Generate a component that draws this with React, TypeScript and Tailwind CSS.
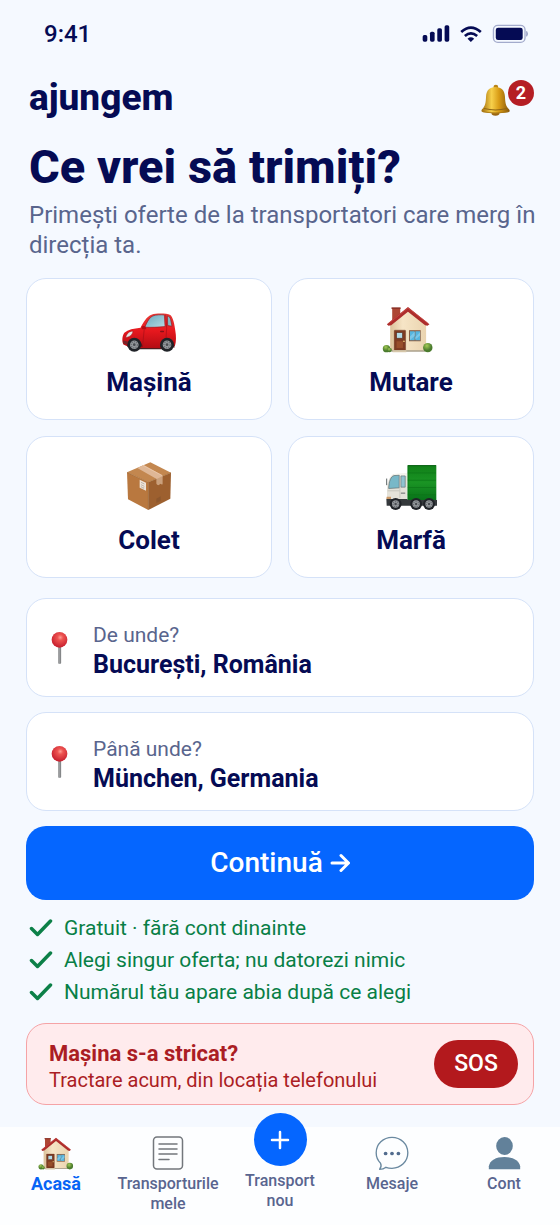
import { useState } from "react";
import type { ReactNode } from "react";

function StatusIcons() {
  return (
    <svg viewBox="426 72 322 60" className="h-5 w-[107px]" aria-hidden="true">
      <g fill="#050b54">
        <rect x="428" y="105" width="14" height="20" rx="5" />
        <rect x="450" y="95" width="14" height="30" rx="5" />
        <rect x="472" y="85" width="14" height="40" rx="5" />
        <rect x="494" y="76" width="14" height="49" rx="5" />
        <path d="M573 126l-10-10q10-8 20 0z" />
      </g>
      <g fill="none" stroke="#050b54" strokeWidth="8">
        <path d="M544 96q29-27 59 0" />
        <path d="M555 108q18-16 37 0" />
      </g>
      <rect x="641" y="76" width="95" height="51" rx="13" fill="none" stroke="#a3abcc" strokeWidth="4" />
      <rect x="648" y="83" width="81" height="37" rx="7" fill="#050b54" />
      <path d="M741 94q5 7 0 15z" fill="#8d96bd" stroke="#8d96bd" strokeWidth="2" />
    </svg>
  );
}

function BellIcon() {
  return (
    <svg viewBox="33 45 86 95" className="h-8 w-[29px]" aria-hidden="true">
      <defs>
        <linearGradient id="bell">
          <stop offset="0" stopColor="#a06c0c" />
          <stop offset=".36" stopColor="#f7d04b" />
          <stop offset=".62" stopColor="#d99c16" />
          <stop offset="1" stopColor="#85560a" />
        </linearGradient>
      </defs>
      <ellipse cx="76" cy="131" rx="12" ry="8" fill="#9a6612" />
      <circle cx="77" cy="54" r="7" fill="#b98316" />
      <path d="M76 54c-18 0-27 11-28 27-1 20-2 29-12 39-3 4-2 8 3 9 24 4 50 4 75 0 5-1 5-6 2-9-10-10-11-20-12-39-1-16-10-27-28-27z" fill="url(#bell)" />
      <path d="M42 118c22 5 46 5 68 0" fill="none" stroke="#8d6414" strokeWidth="3" />
      <path d="M38 127c25 5 51 5 76 0" fill="none" stroke="#a67513" strokeWidth="3" />
    </svg>
  );
}

function Wheel({ x, y, r }: { x: number; y: number; r: number }) {
  return (
    <g>
      <circle cx={x} cy={y} r={r} fill="#202328" />
      <circle cx={x} cy={y} r={r * 0.62} fill="#95999d" />
      <circle cx={x} cy={y} r={r * 0.45} fill="none" stroke="#6b6f74" strokeWidth={r * 0.2} strokeDasharray="4 3" />
      <circle cx={x} cy={y} r={r * 0.2} fill="#4a4d52" />
    </g>
  );
}

function CarIcon() {
  return (
    <svg viewBox="64 48 170 124" className="h-[41px] w-[57px]" aria-hidden="true">
      <defs>
        <linearGradient id="carBody" x2="0" y2="1">
          <stop offset="0" stopColor="#e83a37" />
          <stop offset=".5" stopColor="#e6181e" />
          <stop offset="1" stopColor="#b30c13" />
        </linearGradient>
        <linearGradient id="glass" x2="1" y2="1">
          <stop offset="0" stopColor="#68a8bd" />
          <stop offset="1" stopColor="#b5dbe3" />
        </linearGradient>
      </defs>
      <path d="M86 148h132v13H90z" fill="#3b2023" />
      <path d="M122 96c9-20 19-34 33-40 17-5 45-4 57 1 8 6 13 29 15 47 3 18 3 34-1 46l-12 6-32 2-62-1-35-4-15-7c-5-9-4-25 3-35 11-9 28-13 49-15z" fill="url(#carBody)" />
      <path d="M135 94c7-18 15-30 24-34 9-4 25-4 35-3l2 35c-21 2-42 3-61 2z" fill="url(#glass)" stroke="#9b1820" strokeWidth="2" />
      <path d="M203 60c6 1 8 4 10 11l4 20-13-2z" fill="#85b8c3" stroke="#971620" strokeWidth="2" />
      <path d="M198 56l3 41-4 57M133 100l-5 52" fill="none" stroke="#a40d17" strokeWidth="2" />
      <path d="M77 125c3-13 12-19 22-19-1 9-9 18-22 19z" fill="#e6e9e8" stroke="#9d1218" strokeWidth="1.5" />
      <path d="M69 134l14 3v9l-13-2z" fill="#74252a" />
      <path d="M82 153c0-26 42-32 46 0zM181 155c0-31 42-34 44 0z" fill="#5d1116" />
      <path d="M125 92c8-5 15 0 14 8h-13z" fill="#b30d15" />
      <rect x="181" y="105" width="12" height="4" rx="2" fill="#851018" />
      <Wheel x={103} y={147} r={21} />
      <Wheel x={202} y={147} r={21} />
    </svg>
  );
}

function HouseIcon({ small = false }: { small?: boolean }) {
  return (
    <svg
      viewBox={small ? "66 32 154 140" : "66 32 172 140"}
      className={small ? "h-[33px] w-[36px]" : "h-[47px] w-[58px]"}
      aria-hidden="true"
    >
      <defs>
        <linearGradient id="wall">
          <stop offset="0" stopColor="#dcc29b" />
          <stop offset=".35" stopColor="#f6e5c6" />
          <stop offset="1" stopColor="#ead4b0" />
        </linearGradient>
        <radialGradient id="bush" cx=".4" cy=".3">
          <stop offset="0" stopColor="#a4ca55" />
          <stop offset="1" stopColor="#4a7b2d" />
        </radialGradient>
      </defs>
      <path d="M96 39h24v28l-24 18z" fill="#ad4634" />
      <path d="M94 36h27v5H94z" fill="#8d3328" />
      <path d="M90 82l53-43 54 43v84H90z" fill="url(#wall)" />
      <path d="M80 86l63-51 64 51-6 5-7-2-51-40-50 40-8 2z" fill="#ad2d2c" />
      <path d="M85 84l58-46 59 45" fill="none" stroke="#cf5048" strokeWidth="2" />
      <rect x="102" y="104" width="34" height="60" rx="2" fill="#7e3b22" stroke="#5f2b19" strokeWidth="1" />
      <rect x="109" y="111" width="18" height="17" fill="#b3dbe7" stroke="#5d3022" strokeWidth="2" />
      <path d="M109 137h19v20h-19z" fill="#984e2b" />
      <circle cx="131" cy="137" r="2.5" fill="#e8c575" />
      <rect x="146" y="104" width="35" height="33" fill="#8b6046" />
      <path d="M149 107h14v27h-14zm16 0h14v27h-14z" fill="#55b5df" />
      <path d="M149 133v-10l14-14v12zM165 124l14-14v10l-14 12z" fill="#7cc7e7" />
      <path d="M94 164h101v4H94z" fill="#aaa08d" />
      <path d="M99 164h39v6H97z" fill="#d6c7aa" />
      <circle cx="79" cy="159" r="11" fill="url(#bush)" />
      <circle cx="88" cy="163" r="7" fill="url(#bush)" />
      <circle cx="202" cy="156" r="14" fill="url(#bush)" />
    </svg>
  );
}

function BoxIcon() {
  return (
    <svg viewBox="81 36 138 150" className="h-[50px] w-[46px]" aria-hidden="true">
      <path d="M84 70l64 30v83l-61-32z" fill="#b9783f" />
      <path d="M148 100l68-29-2 78-66 34z" fill="#9d602f" />
      <path d="M84 70l70-30 62 31-68 29z" fill="#c3874f" />
      <path d="M84 70l64 30 68-29M148 100v82" fill="none" stroke="#94602f" strokeWidth="1.500" />
      <path d="M115 57l19-9 56 31v26l-6-3-6 6-5-4V90z" fill="#dfb796" />
      <path d="M173 90l17-8v25l-6-3-5 5-6-3z" fill="#caa07c" />
      <path d="M122 92l19 9v24l-19-9z" fill="#eee4d8" />
      <path d="M126 100l10 5m-10 2l10 5m-9 0v4m4-2v4m3-3v4" stroke="#a59b90" strokeWidth="2" />
      <path d="M172 149l13-7v13l-13 7z" fill="#8d572d" />
      <path d="M132 49l58 31" stroke="#f0cdb0" strokeWidth="2" />
    </svg>
  );
}

function TruckIcon() {
  return (
    <svg viewBox="72 40 160 142" className="h-[47px] w-[53px]" aria-hidden="true">
      <defs>
        <linearGradient id="cargo" x2="0" y2="1">
          <stop offset="0" stopColor="#118018" />
          <stop offset=".5" stopColor="#1a9424" />
          <stop offset="1" stopColor="#087219" />
        </linearGradient>
      </defs>
      <path d="M140 44h87v105h-87z" fill="url(#cargo)" />
      <path d="M142 46v102M141 67h85m-85 22h85m-85 22h85m-85 22h85" stroke="#0a7417" strokeWidth="2" />
      <path d="M141 45h85" stroke="#075f12" strokeWidth="3" />
      <path d="M78 149V117c1-23 7-39 20-47l40-1v80z" fill="#e4e2d9" />
      <path d="M99 70l39-1v7H95z" fill="#f6f5ee" />
      <path d="M83 114c1-22 6-35 16-39l16-1v38z" fill="#78b8c8" stroke="#5b6b6d" strokeWidth="2" />
      <path d="M120 76h13v34h-13z" fill="#8fc3d0" stroke="#657273" strokeWidth="2" />
      <path d="M117 76v67M80 121h36" fill="none" stroke="#b9b9b0" strokeWidth="2" />
      <path d="M77 84v20" stroke="#5c6364" strokeWidth="3" />
      <path d="M76 146h64v3h89v17H77z" fill="#35393c" />
      <path d="M77 139h13v7H76z" fill="#cd9b6a" />
      <path d="M120 128h13" stroke="#65696a" strokeWidth="3" />
      <Wheel x={104} y={161} r={18} />
      <Wheel x={166} y={161} r={18} />
      <Wheel x={205} y={161} r={18} />
    </svg>
  );
}

function PinIcon() {
  return (
    <svg viewBox="94 123 52 102" className="h-[34px] w-[17px] shrink-0" aria-hidden="true">
      <defs>
        <radialGradient id="pin" cx=".55" cy=".35" r=".6">
          <stop offset="0" stopColor="#ff9d94" />
          <stop offset=".3" stopColor="#ee5451" />
          <stop offset="1" stopColor="#c92230" />
        </radialGradient>
      </defs>
      <rect x="116" y="165" width="9" height="57" rx="2" fill="#858789" />
      <path d="M119 170v51" stroke="#b7b8ba" strokeWidth="2" />
      <circle cx="120" cy="149" r="24" fill="url(#pin)" />
    </svg>
  );
}

function CheckIcon() {
  return (
    <svg viewBox="0 0 24 20" className="h-5 w-6 shrink-0" fill="none" stroke="#0c8048" strokeWidth="3.500" strokeLinecap="round" strokeLinejoin="round" aria-hidden="true">
      <path d="M2.500 9.500l6 6L21.500 2" />
    </svg>
  );
}

function PlaceField({ id, label, initial }: { id: string; label: string; initial: string }) {
  const [value, setValue] = useState(initial);
  return (
    <div className="flex h-[99px] items-center gap-[25px] rounded-[20px] border border-[#d5e2f8] bg-white px-6">
      <PinIcon />
      <div className="flex min-w-0 flex-1 flex-col pt-1">
        <label htmlFor={id} className="text-[21px] leading-[30px] text-[#59658d]">{label}</label>
        <input
          id={id}
          value={value}
          onChange={(e) => setValue(e.target.value)}
          className="h-[30px] w-full bg-transparent text-[25px] font-bold text-[#050b54] outline-none"
        />
      </div>
    </div>
  );
}

function NavItem({ label, icon, active = false }: { label: string; icon: ReactNode; active?: boolean }) {
  return (
    <a
      href="#"
      aria-current={active ? "page" : undefined}
      className={
        active
          ? "flex flex-col items-center gap-[3px] pt-2 text-center text-lg leading-5 font-bold text-[#0764f5]"
          : "flex flex-col items-center gap-[3px] pt-2 text-center text-base leading-5 font-medium text-[#59658f]"
      }
    >
      <span className="flex h-9 items-center">{icon}</span>
      <span>{label}</span>
    </a>
  );
}

const categories = [
  { name: "Mașină", icon: <CarIcon /> },
  { name: "Mutare", icon: <HouseIcon /> },
  { name: "Colet", icon: <BoxIcon /> },
  { name: "Marfă", icon: <TruckIcon /> },
];

const benefits = [
  "Gratuit · fără cont dinainte",
  "Alegi singur oferta; nu datorezi nimic",
  "Numărul tău apare abia după ce alegi",
];

export default function App() {
  return (
    <div className="flex min-h-screen flex-col bg-[#f5f9ff] font-['Roboto',sans-serif] text-[#050b54]">
      <div className="flex h-[68px] items-center justify-between pr-[31px] pl-11">
        <span className="text-2xl font-medium">9:41</span>
        <StatusIcons />
      </div>

      <main className="flex flex-1 flex-col px-[26px]">
        <header className="flex h-[60px] items-center justify-between pl-[3px]">
          <span className="text-[37px] leading-10 font-extrabold">ajungem</span>
          <button type="button" aria-label="Notificări" className="relative flex h-9 w-[53px] items-end">
            <BellIcon />
            <span className="absolute top-0 right-0 flex size-[26px] items-center justify-center rounded-full bg-[#b51e24] text-lg font-bold text-white">2</span>
          </button>
        </header>

        <div className="pt-[11px] pl-[3px]">
          <h1 className="text-[47px] leading-[56px] font-extrabold">Ce vrei să trimiți?</h1>
          <p className="-mr-2 pt-[5px] text-2xl leading-[30px] text-[#59658d]">
            Primești oferte de la transportatori care merg în direcția ta.
          </p>
        </div>

        <div className="mt-[18px] grid grid-cols-2 gap-4">
          {categories.map((c) => (
            <button
              key={c.name}
              type="button"
              className="flex h-[142px] flex-col items-center rounded-[20px] border border-[#d5e2f8] bg-white pt-[26px]"
            >
              <span className="flex h-12 items-end">{c.icon}</span>
              <span className="pt-[13px] text-[26px] leading-8 font-bold">{c.name}</span>
            </button>
          ))}
        </div>

        <div className="mt-5 flex flex-col gap-[15px]">
          <PlaceField id="from" label="De unde?" initial="București, România" />
          <PlaceField id="to" label="Până unde?" initial="München, Germania" />
          <button type="button" className="flex h-[74px] items-center justify-center gap-[7px] rounded-[20px] bg-[#0566ff] text-[28px] font-medium text-white">
            Continuă
            <svg viewBox="0 0 20 20" className="size-5" fill="none" stroke="currentColor" strokeWidth="3" strokeLinecap="round" strokeLinejoin="round" aria-hidden="true">
              <path d="M2 10h16M11 2.500l7.500 7.500-7.500 7.500" />
            </svg>
          </button>
        </div>

        <ul className="mt-[13px] flex flex-col pl-[3px]">
          {benefits.map((b) => (
            <li key={b} className="flex h-8 items-center gap-[11px] text-[21px] text-[#087f46]">
              <CheckIcon />
              <span>{b}</span>
            </li>
          ))}
        </ul>

        <section className="mt-[14px] flex h-[82px] items-center justify-between rounded-[20px] border border-[#f5a3a6] bg-[#ffebed] pr-[15px] pl-[22px] text-[#ab1d24]">
          <div className="pt-[6px] leading-[26px]">
            <h2 className="text-[22px] font-bold">Mașina s-a stricat?</h2>
            <p className="text-xl leading-[26px]">Tractare acum, din locația telefonului</p>
          </div>
          <button type="button" className="h-12 w-[84px] rounded-full bg-[#b3191d] text-[23px] font-medium text-white">SOS</button>
        </section>
      </main>

      <nav className="mt-[22px] grid h-[98px] grid-cols-5 bg-[#fdfeff]">
        <NavItem active label="Acasă" icon={<HouseIcon small />} />
        <NavItem
          label="Transporturile mele"
          icon={
            <svg viewBox="0 0 32 36" className="h-9 w-8" fill="none" stroke="#73777c" strokeWidth="1.500" strokeLinecap="round" aria-hidden="true">
              <rect x="1.500" y="2" width="29" height="32" rx="3.500" />
              <path d="M7 9h18M7 14h18M7 19h18M7 24.500h10" />
            </svg>
          }
        />
        <a href="#" className="-mt-[14px] flex flex-col items-center gap-[5px] text-center text-base leading-5 font-medium text-[#59658f]">
          <span className="flex size-[53px] items-center justify-center rounded-full bg-[#0566ff]">
            <svg viewBox="0 0 20 20" className="size-5" stroke="#ffffff" strokeWidth="2.500" strokeLinecap="round" aria-hidden="true">
              <path d="M10 2v16M2 10h16" />
            </svg>
          </span>
          <span className="w-20">Transport nou</span>
        </a>
        <NavItem
          label="Mesaje"
          icon={
            <svg viewBox="290 378 100 104" className="h-[35px] w-[34px]" fill="none" stroke="#6a89a0" strokeWidth="4" strokeLinejoin="round" aria-hidden="true">
              <path d="M303 477c5-6 6-12 3-18-8-8-13-18-13-31 0-26 21-46 47-46s47 20 47 46-21 46-47 46c-7 0-13-1-18-3-5 4-11 6-19 6z" />
              <g fill="#526c8e" stroke="none">
                <circle cx="321" cy="430" r="5.500" />
                <circle cx="340" cy="430" r="5.500" />
                <circle cx="359" cy="430" r="5.500" />
              </g>
            </svg>
          }
        />
        <NavItem
          label="Cont"
          icon={
            <svg viewBox="618 378 98 102" className="h-[34px] w-[33px]" fill="#62819a" aria-hidden="true">
              <ellipse cx="667" cy="408" rx="25" ry="27" />
              <path d="M620 478v-9c3-18 21-28 47-28s44 10 47 28v9z" />
            </svg>
          }
        />
      </nav>
    </div>
  );
}
